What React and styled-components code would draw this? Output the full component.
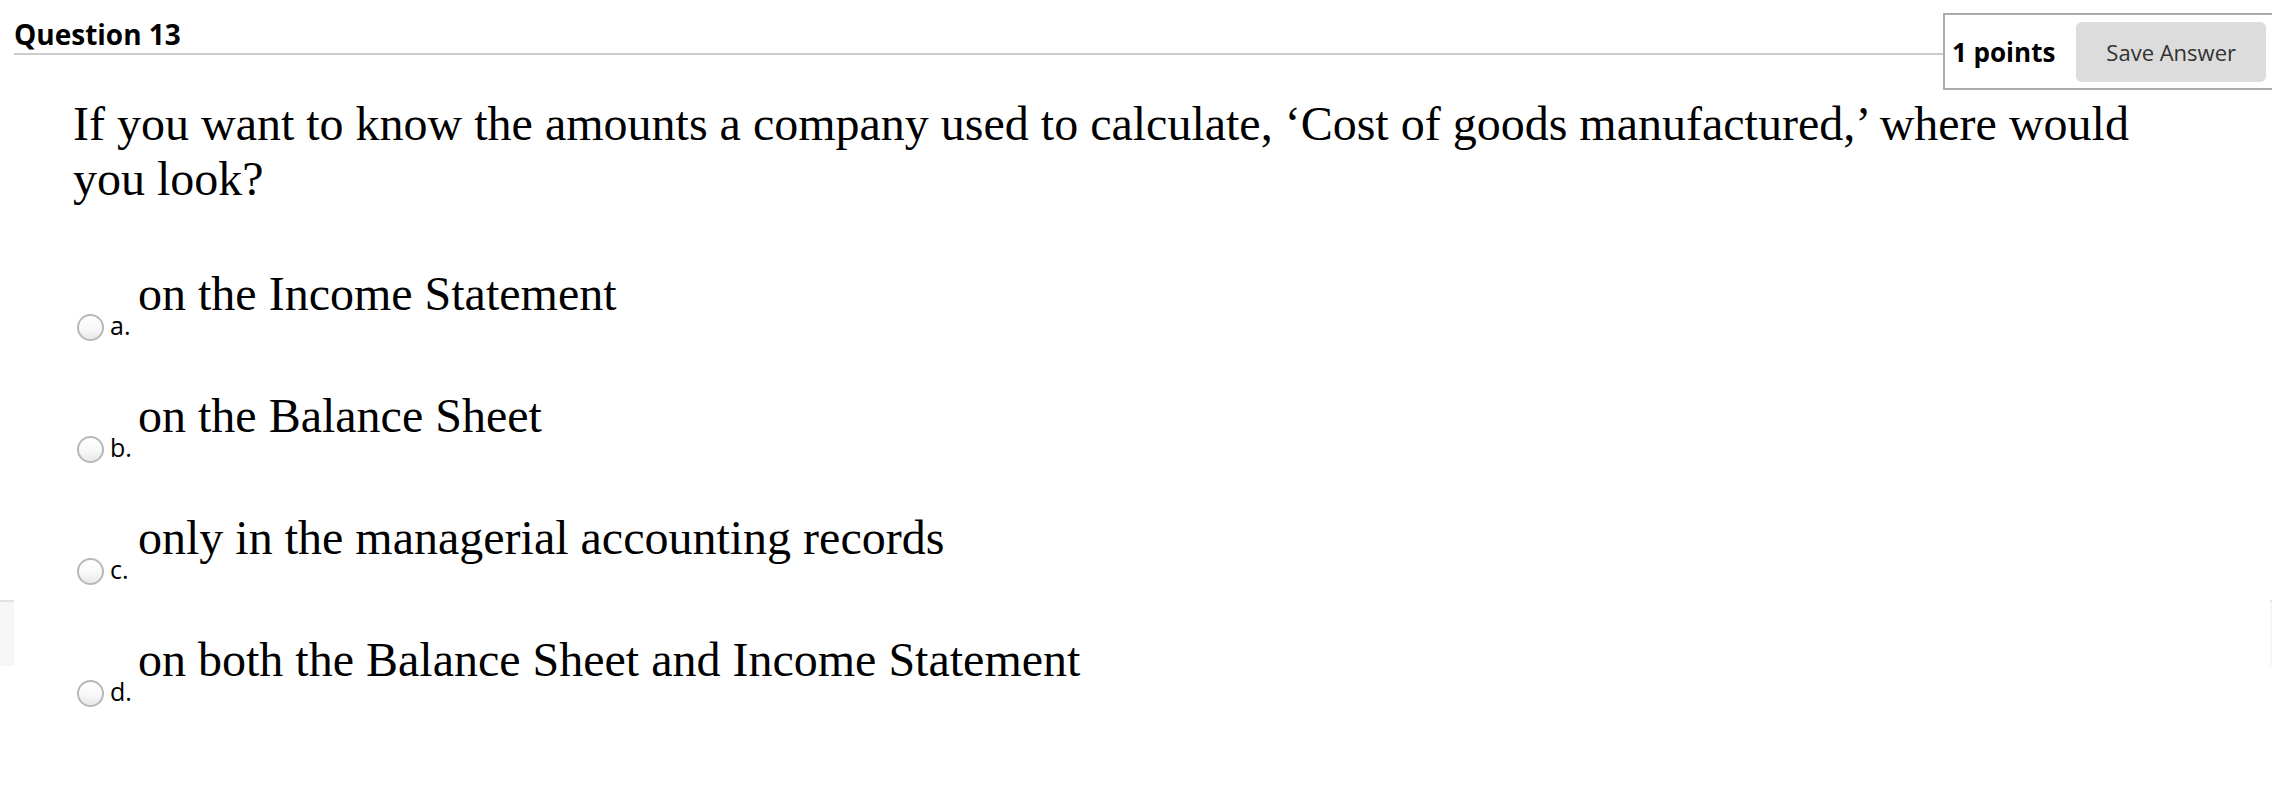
import React from "react";
import styled, { createGlobalStyle } from "styled-components";

const GlobalStyle = createGlobalStyle`
  html, body {
    margin: 0;
    padding: 0;
    overflow: hidden;
    background: #ffffff;
  }
`;

const Page = styled.div`
  min-height: 790px;
  background-color: #ffffff;
  background-image: linear-gradient(
    to bottom,
    transparent 600px,
    #e2e2e2 600px,
    #e2e2e2 602px,
    #f6f6f6 602px,
    #f6f6f6 666px,
    transparent 666px
  );
`;

const Panel = styled.div`
  margin: 0 2px 0 14px;
  min-height: 790px;
  background: #ffffff;
`;

const Header = styled.div`
  display: flex;
  align-items: flex-start;
`;

const Title = styled.h2`
  flex: 1;
  margin: 0;
  padding-top: 16px;
  font-family: "Open Sans", "Noto Sans", sans-serif;
  font-weight: 700;
  font-size: 28px;
  line-height: 37px;
  color: #000;
  border-bottom: 2px solid #cccccc;
`;

const PointsBox = styled.div`
  margin-top: 13px;
  margin-right: -6px;
  display: flex;
  align-items: center;
  gap: 21px;
  padding: 7px 8px 6px 7px;
  border: 2px solid #ababab;
  background: #fff;
`;

const Points = styled.span`
  font-family: "Open Sans", "Noto Sans", sans-serif;
  font-weight: 700;
  font-size: 26px;
  color: #000;
`;

const SaveButton = styled.button`
  height: 60px;
  padding: 0 30px;
  border: none;
  border-radius: 6px;
  background: #dcdcdc;
  font-family: "Open Sans", "Noto Sans", sans-serif;
  font-size: 22px;
  color: #333;
`;

const QuestionText = styled.p`
  margin: 6px 0 0 59px;
  font-family: "Liberation Serif", "Times New Roman", serif;
  font-size: 48px;
  line-height: 55px;
  color: #000;
  max-width: 2120px;
`;

const OptionList = styled.div`
  margin-top: 60px;
  display: flex;
  flex-direction: column;
  gap: 47px;
`;

const OptionRow = styled.label`
  display: flex;
  align-items: flex-end;
  padding-left: 63px;
`;

const Radio = styled.input.attrs({ type: "radio", name: "q13" })`
  appearance: none;
  -webkit-appearance: none;
  margin: 0 6px 0 0;
  width: 27px;
  height: 27px;
  border-radius: 50%;
  border: 2px solid #b8b8b8;
  background: linear-gradient(to bottom, #ffffff 0%, #f8f8f8 55%, #e8e8e8 100%);
  box-sizing: border-box;
  flex: none;
`;

const Letter = styled.span`
  width: 28px;
  flex: none;
  font-family: "Open Sans", "Noto Sans", sans-serif;
  font-size: 25px;
  line-height: 32px;
  color: #000;
`;

const AnswerText = styled.span`
  margin-bottom: 20px;
  font-family: "Liberation Serif", "Times New Roman", serif;
  font-size: 48px;
  line-height: 55px;
  color: #000;
`;

const options = [
  { letter: "a.", text: "on the Income Statement" },
  { letter: "b.", text: "on the Balance Sheet" },
  { letter: "c.", text: "only in the managerial accounting records" },
  { letter: "d.", text: "on both the Balance Sheet and Income Statement" },
];

export default function App() {
  return (
    <>
      <GlobalStyle />
      <Page>
        <Panel>
          <Header>
            <Title>Question 13</Title>
            <PointsBox>
              <Points>1 points</Points>
              <SaveButton>Save Answer</SaveButton>
            </PointsBox>
          </Header>
          <QuestionText>
            If you want to know the amounts a company used to calculate, ‘Cost of goods manufactured,’ where would you look?
          </QuestionText>
          <OptionList>
            {options.map((o) => (
              <OptionRow key={o.letter}>
                <Radio />
                <Letter>{o.letter}</Letter>
                <AnswerText>{o.text}</AnswerText>
              </OptionRow>
            ))}
          </OptionList>
        </Panel>
      </Page>
    </>
  );
}
